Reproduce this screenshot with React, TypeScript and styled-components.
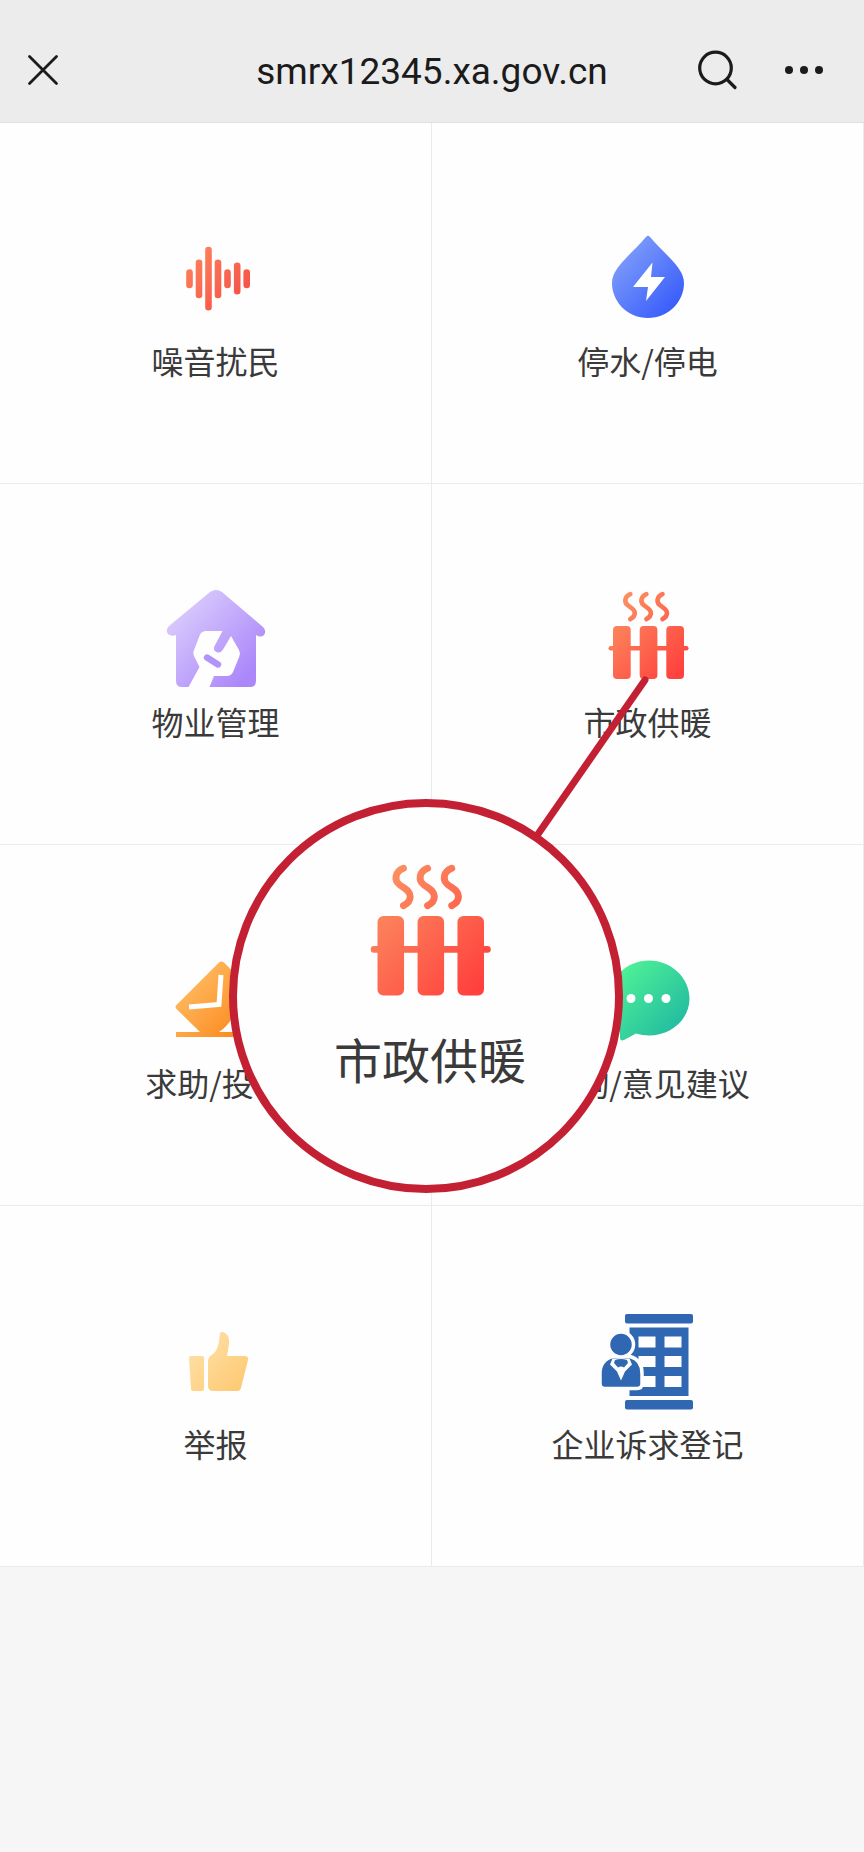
import React from "react";
import styled, { createGlobalStyle } from "styled-components";

const Global = createGlobalStyle`
  * { box-sizing: border-box; }
  body { margin: 0; background: #f6f6f6; font-family: "Noto Sans CJK SC", "Noto Sans", sans-serif; color: #3a3a3a; }
  button { border: 0; padding: 0; background: none; color: inherit; cursor: pointer; }
  svg { display: block; }
`;

const Header = styled.header`
  display: grid;
  grid-template-columns: 1fr auto 1fr;
  align-items: center;
  height: 123px;
  padding: 18px 26px 0;
  background: #ececec;
  border-bottom: 1px solid #dfdfdf;
  color: #1b1b1b;
`;

const Title = styled.h1`
  margin: 0;
  padding-top: 4px;
  font: 400 37px/48px Roboto, "Liberation Sans", sans-serif;
`;

const Actions = styled.div<{ $end?: boolean }>`
  display: flex;
  align-items: center;
  justify-content: ${(p) => (p.$end ? "flex-end" : "flex-start")};
  gap: 46px;
  padding-right: ${(p) => (p.$end ? 14 : 0)}px;
`;

const Stage = styled.main`
  position: relative;
`;

const Services = styled.nav`
  display: grid;
  grid-template-columns: repeat(2, 1fr);
  background: #fefefe;
`;

const Service = styled.a`
  display: flex;
  flex-direction: column;
  align-items: center;
  gap: 13px;
  padding: 104px 0 103px;
  border-right: 1px solid #ebebeb;
  border-bottom: 1px solid #ebebeb;
  color: inherit;
  text-decoration: none;
`;

const Label = styled.span<{ $large?: boolean }>`
  font-size: ${(p) => (p.$large ? 48 : 32)}px;
  line-height: ${(p) => (p.$large ? 60 : 40)}px;
  white-space: nowrap;
`;

const Pointer = styled.svg`
  position: absolute;
  left: 50%;
  top: 540px;
  margin-left: 94px;
`;

const Magnifier = styled.aside`
  position: absolute;
  left: 50%;
  top: 676px;
  width: 394px;
  height: 394px;
  margin-left: -203px;
  padding: 52px 0 0 8px;
  display: flex;
  flex-direction: column;
  align-items: center;
  gap: 19px;
  border: 8px solid #c42034;
  border-radius: 50%;
  background: #fefefe;
`;

type Stop = [string, string];

const Gradient = ({ id, stops }: { id: string; stops: Stop }) => (
  <defs>
    <linearGradient id={id} gradientUnits="userSpaceOnUse" x1="15" y1="20" x2="85" y2="85">
      <stop offset="0" stopColor={stops[0]} />
      <stop offset="1" stopColor={stops[1]} />
    </linearGradient>
  </defs>
);

const Icon = ({ size = 100, children }: { size?: number; children: React.ReactNode }) => (
  <svg width={size} height={size} viewBox="0 0 100 100" aria-hidden="true">
    {children}
  </svg>
);

const NoiseIcon = () => (
  <Icon>
    <Gradient id="noise" stops={["#ff8a5e", "#f44743"]} />
    <g stroke="url(#noise)" strokeWidth="6.6" strokeLinecap="round">
      <path d="M23.500 45.500V58M33 35.700V68M42.500 23V80.300M52 35.700V68M61.500 45.500V58M71.200 38.700V64.300M80.700 45.500V58" />
    </g>
  </Icon>
);

const WaterPowerIcon = () => (
  <Icon>
    <Gradient id="water" stops={["#86a3fb", "#3156fb"]} />
    <path fill="url(#water)" d="M50 8.500Q51.500 9 53 11C58 17.500 65 23.500 71 30C80 39.500 86 47 86 56C86 75 70 91 50 91S14 75 14 56C14 47 20 39.500 29 30C35 23.500 42 17.500 47 11Q48.500 9 50 8.500Z" />
    <path fill="#fff" d="M54.500 35.500L53 50H67L48 74L50 60H35Z" />
  </Icon>
);

const PropertyIcon = () => (
  <Icon>
    <Gradient id="property" stops={["#d8c9fc", "#ab87fa"]} />
    <path fill="url(#property)" d="M44 4Q50 0 56 4L97 39Q101 43 98 47Q95 50 90 47V93Q90 99 84 99H16Q10 99 10 93V47Q5 49 2 46Q-1 42 3 38Z" />
    <path fill="#fefefe" d="M40 43Q36 43 34 46.500L28 62Q26.500 65 28.500 69L33.500 79L22.500 99H43.500L48 88H61Q65 88 67 84L73.500 68Q74.500 65 73 62L65 48L57 61.500Q54 66 50.500 64Q46.500 62 48.500 58L56.500 43Z" />
    <path stroke="#b293fa" strokeWidth="6.4" strokeLinecap="round" d="M41 69.500L52 76.500" />
  </Icon>
);

const HeatingIcon = ({ id, size }: { id: string; size?: number }) => (
  <Icon size={size}>
    <Gradient id={id} stops={["#fb9162", "#ff403d"]} />
    <g transform="translate(0 -2.5)">
      <g fill={`url(#${id})`}>
        <rect x="15" y="40.500" width="17.700" height="53" rx="4" />
        <rect x="41.700" y="40.500" width="17.700" height="53" rx="4" />
        <rect x="68.300" y="40.500" width="17.700" height="53" rx="4" />
        <rect x="10.500" y="60.500" width="80" height="4.500" rx="2.200" />
      </g>
      <g fill="none" stroke={`url(#${id})`} strokeWidth="4.600" strokeLinecap="round">
        <path d="M32.300 8.700C26.500 11 26 16.500 29.500 19.500C32.500 22 36.800 23.500 36.800 27.500C36.800 30.500 34.500 32.500 32.300 33.600" />
        <path d="M48.400 8.700C42.600 11 42.100 16.500 45.600 19.500C48.600 22 52.900 23.500 52.900 27.500C52.900 30.500 50.600 32.500 48.400 33.600" />
        <path d="M64.500 8.700C58.700 11 58.200 16.500 61.700 19.500C64.700 22 69 23.500 69 27.500C69 30.500 66.700 32.500 64.500 33.600" />
      </g>
    </g>
  </Icon>
);

const HelpIcon = () => (
  <Icon>
    <Gradient id="help" stops={["#ffc16a", "#fb8417"]} />
    <path fill="url(#help)" d="M53 13.500Q55.500 11.500 58 13.500L94 50Q96 53 93 55L66 69Q61 78 53 83H93V88H10V83H34L10.500 60Q8.500 58 10.500 56Z" />
    <path fill="none" stroke="#fff" strokeWidth="5" d="M55 26L53 55.500L23 58" />
  </Icon>
);

const ConsultIcon = () => (
  <Icon>
    <Gradient id="consult" stops={["#52f596", "#20b9a1"]} />
    <g transform="translate(0 -2.5)">
      <path fill="url(#consult)" d="M51 14C73 14 91.500 31 91.500 52S73 89 51 89Q44 89 38 87L26 93.500Q22 95 22 91V78Q11 67 11 52C11 31 29 14 51 14Z" />
      <g fill="#fff">
        <circle cx="33" cy="52" r="4.500" />
        <circle cx="50.500" cy="52" r="4.500" />
        <circle cx="68" cy="52" r="4.500" />
      </g>
    </g>
  </Icon>
);

const ReportIcon = () => (
  <Icon>
    <Gradient id="report" stops={["#ffe6b5", "#fdc66b"]} />
    <path fill="url(#report)" d="M25 46H36Q38 46 38 48V79Q38 81 36 81H27Q25 81 25 79L23 48Q23 46 25 46Z" />
    <path fill="url(#report)" d="M54 23Q56 21 59 23Q64 26 63 34L61 46H78Q83 46 82 50L75 78Q74 81 71 81H46Q42 80 42 76V50Q43 46 47 44Q52 40 53 31Z" />
  </Icon>
);

const EnterpriseIcon = () => (
  <Icon>
    <g transform="translate(0 1.5)">
      <g fill="#3067b3">
        <rect x="27" y="2.500" width="68" height="9.500" rx="2" />
        <rect x="27" y="88.500" width="68" height="9.500" rx="2" />
        <path d="M31.500 16H90.500V84.500H31.500Z" />
      </g>
      <path fill="#fefefe" d="M40.500 25H57.500V36H40.500ZM66.500 25H83.500V36H66.500ZM40.500 44.500H57.500V55.500H40.500ZM66.500 44.500H83.500V55.500H66.500ZM40.500 64.500H57.500V75.500H40.500ZM66.500 64.500H83.500V75.500H66.500Z" />
      <g fill="#3067b3" stroke="#fefefe" strokeWidth="3.500">
        <path d="M15 45H32Q44 48 44 62V72Q44 77 39 77H7Q2 77 2 72V62Q2 48 15 45Z" />
        <circle cx="23" cy="33" r="12.500" />
      </g>
      <path fill="#fefefe" d="M14.500 47L12 53L19 60L23 69L27 60L34 53L31.500 47Z" />
      <path fill="#3067b3" d="M17 48.500Q23 46.500 29 48.500L30 51.500L26 56Q23 54 20 56L16 51.500Z" />
    </g>
  </Icon>
);

const services: { label: string; icon: React.ReactNode }[] = [
  { label: "噪音扰民", icon: <NoiseIcon /> },
  { label: "停水/停电", icon: <WaterPowerIcon /> },
  { label: "物业管理", icon: <PropertyIcon /> },
  { label: "市政供暖", icon: <HeatingIcon id="heating" /> },
  { label: "求助/投诉", icon: <HelpIcon /> },
  { label: "咨询/意见建议", icon: <ConsultIcon /> },
  { label: "举报", icon: <ReportIcon /> },
  { label: "企业诉求登记", icon: <EnterpriseIcon /> },
];

export default function App() {
  return (
    <>
      <Global />
      <Header>
        <Actions>
          <button type="button" aria-label="关闭">
            <svg width="34" height="34" viewBox="0 0 34 34" fill="none" stroke="currentColor" strokeWidth="2.800" strokeLinecap="round">
              <path d="M3.500 3.500L30.500 30.500M30.500 3.500L3.500 30.500" />
            </svg>
          </button>
        </Actions>
        <Title>smrx12345.xa.gov.cn</Title>
        <Actions $end>
          <button type="button" aria-label="搜索">
            <svg width="42" height="42" viewBox="0 0 42 42" fill="none" stroke="currentColor" strokeWidth="3.200" strokeLinecap="round">
              <circle cx="19.500" cy="19" r="15.800" />
              <path d="M31 30.500L39 38.500" />
            </svg>
          </button>
          <button type="button" aria-label="更多">
            <svg width="40" height="10" viewBox="0 0 40 10" fill="currentColor">
              <circle cx="5" cy="5" r="4" />
              <circle cx="20" cy="5" r="4" />
              <circle cx="35" cy="5" r="4" />
            </svg>
          </button>
        </Actions>
      </Header>
      <Stage>
        <Services aria-label="服务">
          {services.map((s) => (
            <Service href="#" key={s.label}>
              {s.icon}
              <Label>{s.label}</Label>
            </Service>
          ))}
        </Services>
        <Pointer width="140" height="190" viewBox="0 0 140 190" aria-hidden="true">
          <path d="M119 17L10 174" stroke="#c42034" strokeWidth="7" strokeLinecap="round" />
        </Pointer>
        <Magnifier>
          <HeatingIcon id="heating-large" size={150} />
          <Label $large>市政供暖</Label>
        </Magnifier>
      </Stage>
    </>
  );
}
